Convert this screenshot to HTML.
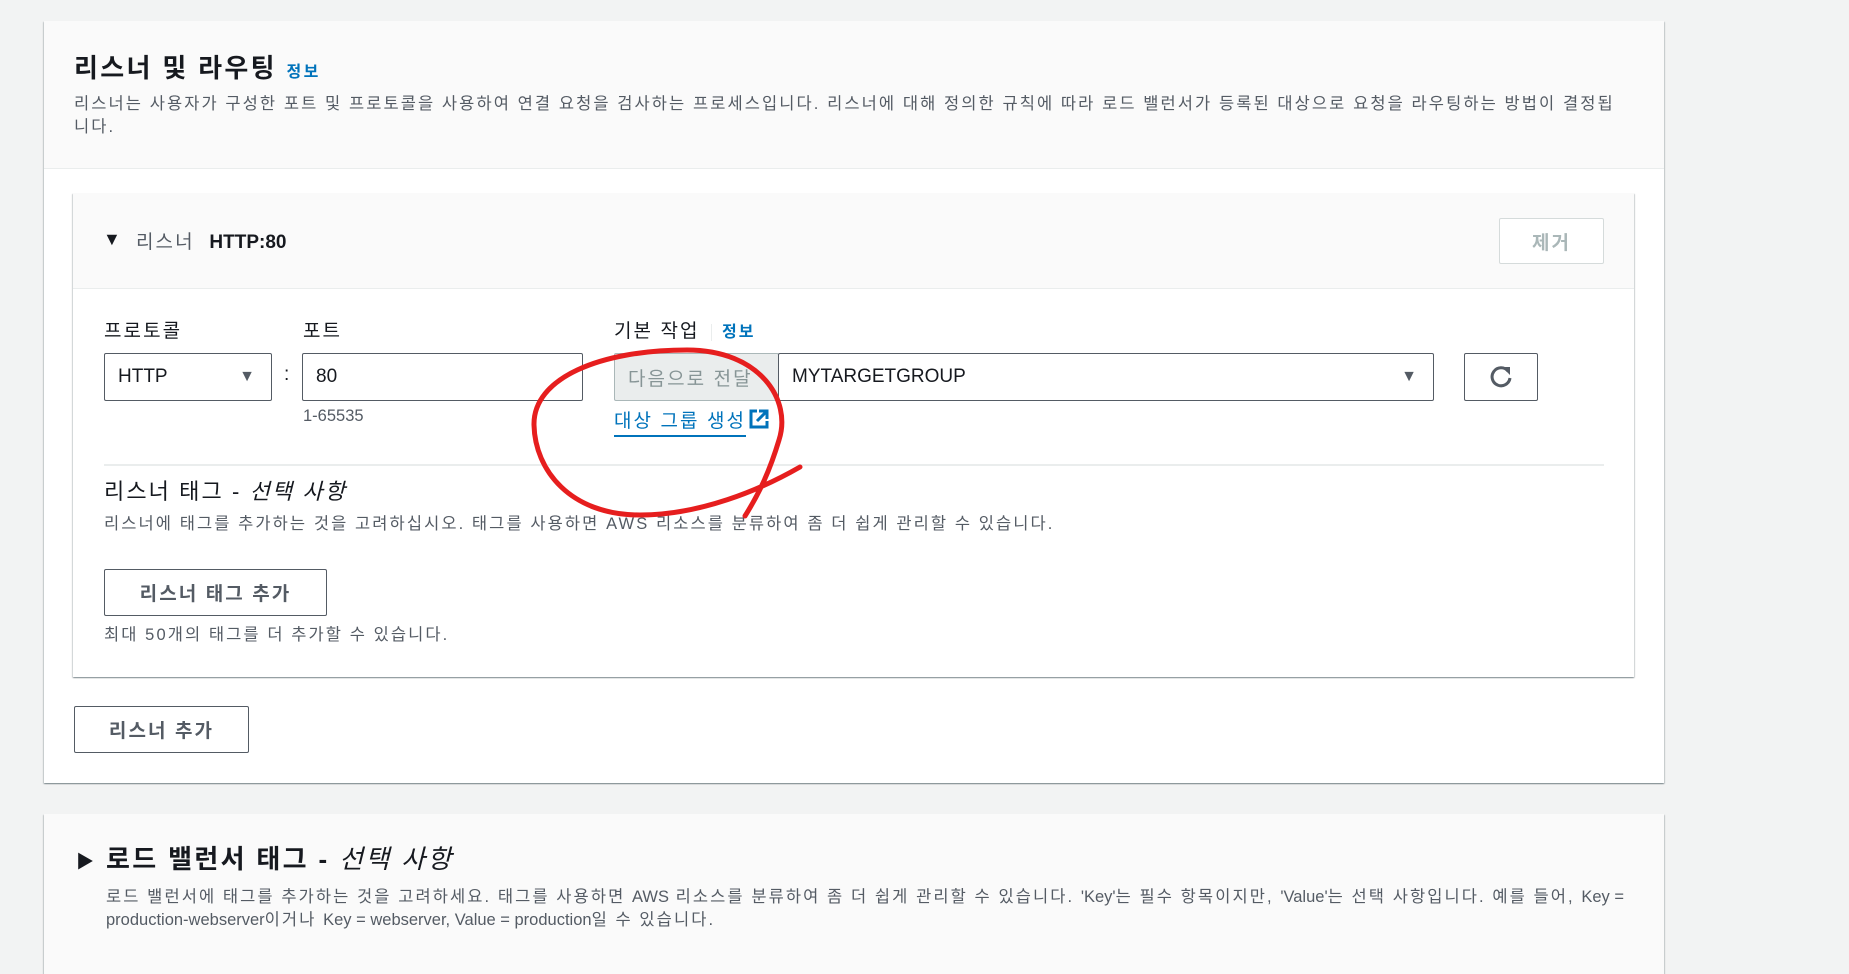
<!DOCTYPE html>
<html><head><meta charset="utf-8"><style>
*{box-sizing:border-box;margin:0;padding:0}
body{width:1849px;height:949px;background:#f2f3f3;position:relative;overflow:hidden;font-family:"Liberation Sans","Noto Sans CJK KR",sans-serif;color:#16191f;letter-spacing:0.13em}
.l{letter-spacing:0}
.a{position:absolute;white-space:nowrap}
.panel{position:absolute;background:#fff;box-shadow:0 1px 1px 0 rgba(0,28,36,.3),1px 1px 1px 0 rgba(0,28,36,.15),-1px 1px 1px 0 rgba(0,28,36,.15)}
.btn{position:absolute;border:1px solid #545b64;border-radius:2px;background:#fff;font-weight:bold;font-size:19px;color:#545b64;display:flex;align-items:center;justify-content:center}
.inp{position:absolute;border:1px solid #aab7b8;border-radius:2px;background:#fff;font-size:19px;display:flex;align-items:center;padding-left:13px}
.gray{color:#545b64;font-size:16.5px}
.lbl{font-size:19px}
</style></head><body>
<div class="panel" style="left:44px;top:21px;width:1620px;height:762px">
  <div style="position:absolute;left:0;top:0;width:100%;height:148px;background:#fafafa;border-bottom:1px solid #eaeded"></div>
</div>
<div class="a" style="left:74px;top:48px;font-size:26px;font-weight:bold;letter-spacing:0.09em">리스너 및 라우팅 <span style="font-size:16px;color:#0073bb">정보</span></div>
<div class="a gray" style="left:74px;top:90px">리스너는 사용자가 구성한 포트 및 프로토콜을 사용하여 연결 요청을 검사하는 프로세스입니다. 리스너에 대해 정의한 규칙에 따라 로드 밸런서가 등록된 대상으로 요청을 라우팅하는 방법이 결정됩</div>
<div class="a gray" style="left:74px;top:113px">니다.</div>

<div class="panel" style="left:73px;top:193px;width:1561px;height:484px">
  <div style="position:absolute;left:0;top:0;width:100%;height:96px;background:#fafafa;border-bottom:1px solid #eaeded"></div>
</div>
<div class="a" style="left:103px;top:229px;font-size:18px">▼</div>
<div class="a" style="left:136px;top:227px;font-size:19px;color:#545b64">리스너 &nbsp;<b class="l" style="color:#16191f">HTTP:80</b></div>
<div class="btn" style="left:1499px;top:218px;width:105px;height:46px;border-color:#d5dbdb;color:#aab7b8">제거</div>

<div class="a lbl" style="left:104px;top:316px">프로토콜</div>
<div class="a lbl" style="left:303px;top:316px">포트</div>
<div class="a lbl" style="left:614px;top:316px">기본 작업 <span style="border-left:1px solid #eaeded;margin-left:4px;padding-left:10px;color:#0073bb;font-weight:bold;font-size:16px">정보</span></div>

<div class="inp l" style="left:104px;top:353px;width:168px;height:48px;border-color:#545b64">HTTP<span style="position:absolute;right:16px;font-size:16px;color:#545b64">▼</span></div>
<div class="a" style="left:284px;top:364px;font-size:19px">:</div>
<div class="inp l" style="left:302px;top:353px;width:281px;height:48px;border-color:#545b64">80</div>
<div class="a gray l" style="left:303px;top:407px">1-65535</div>
<div class="inp" style="left:614px;top:353px;width:165px;height:48px;background:#eaeded;color:#879596;border-color:#aab7b8;overflow:hidden">다음으로 전달</div>
<div class="inp l" style="left:778px;top:353px;width:656px;height:48px;border-color:#545b64">MYTARGETGROUP<span style="position:absolute;right:16px;font-size:16px;color:#545b64">▼</span></div>
<div class="btn" style="left:1464px;top:353px;width:74px;height:48px;font-size:26px;color:#545b64">
<svg width="26" height="26" viewBox="0 0 26 26"><path d="M20 7A9 9 0 1 0 22 14" fill="none" stroke="#545b64" stroke-width="3"/><path d="M14 3h8v8z" fill="#545b64"/></svg></div>
<div class="a" style="left:614px;top:408px;font-size:19px;color:#0073bb;line-height:26px"><span style="border-bottom:2px solid #0073bb;display:inline-block">대상 그룹 생성</span><svg style="vertical-align:-3px;margin-left:2px" width="22" height="22" viewBox="0 0 22 22"><path d="M9 3H3v16h16v-6" fill="none" stroke="#0073bb" stroke-width="3"/><path d="M11 3h8v8M19 3L9 13" fill="none" stroke="#0073bb" stroke-width="3"/></svg></div>

<div style="position:absolute;left:104px;top:464px;width:1500px;height:2px;background:#eaeded"></div>
<div class="a" style="left:104px;top:474px;font-size:22px">리스너 태그 - <i>선택 사항</i></div>
<div class="a gray" style="left:104px;top:510px">리스너에 태그를 추가하는 것을 고려하십시오. 태그를 사용하면 AWS 리소스를 분류하여 좀 더 쉽게 관리할 수 있습니다.</div>
<div class="btn" style="left:104px;top:569px;width:223px;height:47px">리스너 태그 추가</div>
<div class="a gray" style="left:104px;top:621px">최대 50개의 태그를 더 추가할 수 있습니다.</div>
<div class="btn" style="left:74px;top:706px;width:175px;height:47px">리스너 추가</div>

<div class="panel" style="left:44px;top:814px;width:1620px;height:160px;background:#fafafa"></div>
<div class="a" style="left:76px;top:848px;font-size:18px">▶</div>
<div class="a" style="left:106px;top:839px;font-size:26px;font-weight:bold;letter-spacing:0.09em">로드 밸런서 태그 - <i style="font-weight:normal">선택 사항</i></div>
<div class="a gray" style="left:106px;top:883px">로드 밸런서에 태그를 추가하는 것을 고려하세요. 태그를 사용하면 <span class="l">AWS</span> 리소스를 분류하여 좀 더 쉽게 관리할 수 있습니다. <span class="l">'Key'</span>는 필수 항목이지만, <span class="l">'Value'</span>는 선택 사항입니다. 예를 들어, <span class="l">Key =</span></div>
<div class="a gray" style="left:106px;top:906px"><span class="l">production-webserver</span>이거나 <span class="l">Key = webserver, Value = production</span>일 수 있습니다.</div>

<svg class="a" style="left:0;top:0" width="1849" height="949"><path d="M800 467C760 490 700 515 640 515C570 515 535 470 534 425C533 378 600 350 687 350C760 350 792 400 779 440C770 470 760 492 745 516" fill="none" stroke="#e61e1e" stroke-width="5" stroke-linecap="round"/></svg>
</body></html>
